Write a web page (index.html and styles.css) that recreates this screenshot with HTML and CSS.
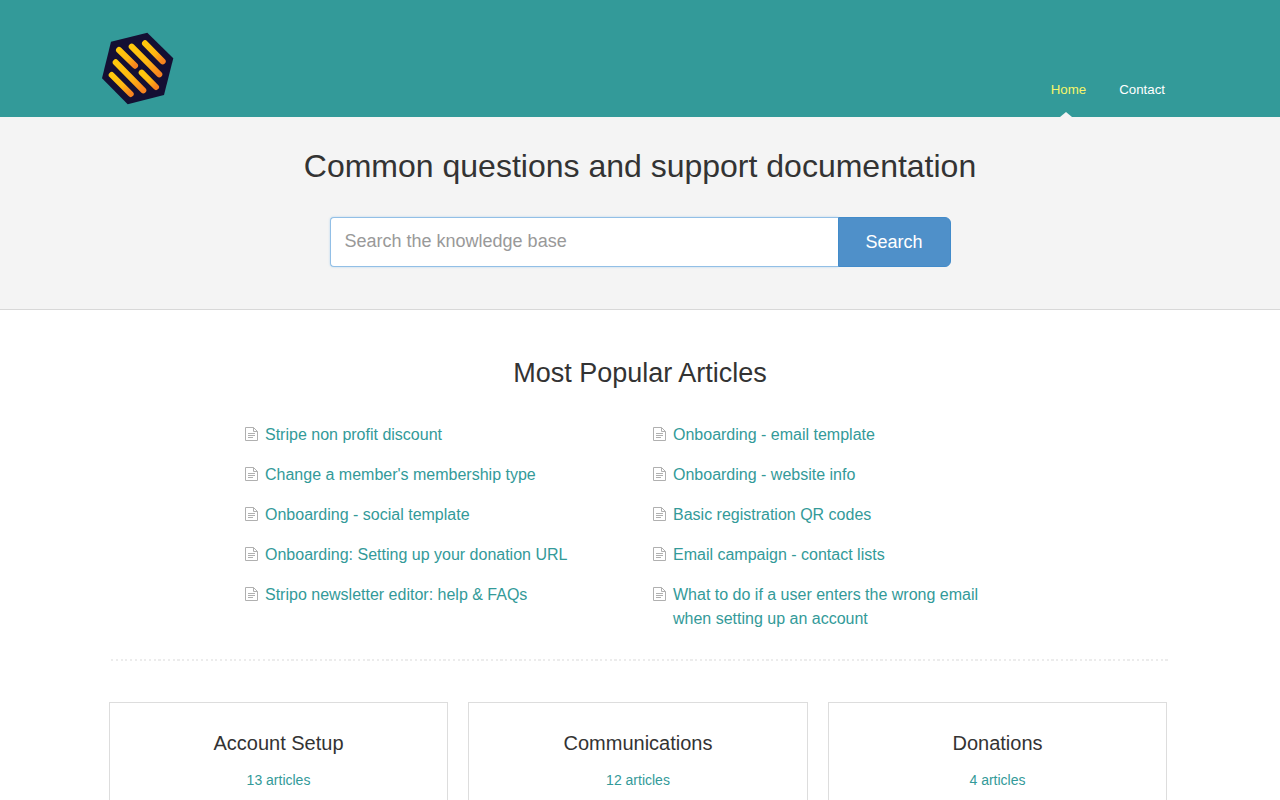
FILE: index.html
```html
<!DOCTYPE html>
<html lang="en">
<head>
  <meta charset="UTF-8">
  <title>Support documentation</title>
  <link rel="stylesheet" href="styles.css">
</head>
<body>
  <header class="site-header">
    <div class="header-inner">
      <a class="logo" href="#">
        <svg width="76" height="76" viewBox="0 0 76 76">
          <defs>
            <linearGradient id="bar" x1="0" y1="0" x2="1" y2="1">
              <stop offset="0" stop-color="#ffc80c"/>
              <stop offset="0.55" stop-color="#ffb912"/>
              <stop offset="1" stop-color="#f8831f"/>
            </linearGradient>
          </defs>
          <polygon points="11,11.7 47.3,2.7 73.3,28.3 64,65 27.7,74.3 2,48.3" fill="#140f33"/>
          <g stroke="url(#bar)" stroke-width="6" stroke-linecap="round">
            <line x1="45" y1="13.3" x2="62.7" y2="31.3"/>
            <line x1="31.7" y1="16.7" x2="59.3" y2="44.3"/>
            <line x1="19" y1="20" x2="35" y2="35.7"/>
            <line x1="41.7" y1="42.7" x2="56" y2="57"/>
            <line x1="15.7" y1="32.3" x2="43.3" y2="60.3"/>
            <line x1="11.7" y1="45" x2="30.7" y2="64"/>
          </g>
        </svg>
      </a>
      <nav class="main-nav">
        <a class="nav-link active" href="#">Home</a>
        <a class="nav-link" href="#">Contact</a>
      </nav>
    </div>
  </header>

  <section class="hero">
    <h1>Common questions and support documentation</h1>
    <form class="search-form">
      <input class="search-input" type="text" placeholder="Search the knowledge base">
      <button class="search-button" type="button">Search</button>
    </form>
  </section>

  <main class="content">
    <h2 class="popular-title">Most Popular Articles</h2>
    <ul class="article-list">
      <li><svg class="doc-icon" viewBox="0 0 13 14"><use href="#doc"/></svg><a href="#">Stripe non profit discount</a></li>
      <li><svg class="doc-icon" viewBox="0 0 13 14"><use href="#doc"/></svg><a href="#">Onboarding - email template</a></li>
      <li><svg class="doc-icon" viewBox="0 0 13 14"><use href="#doc"/></svg><a href="#">Change a member's membership type</a></li>
      <li><svg class="doc-icon" viewBox="0 0 13 14"><use href="#doc"/></svg><a href="#">Onboarding - website info</a></li>
      <li><svg class="doc-icon" viewBox="0 0 13 14"><use href="#doc"/></svg><a href="#">Onboarding - social template</a></li>
      <li><svg class="doc-icon" viewBox="0 0 13 14"><use href="#doc"/></svg><a href="#">Basic registration QR codes</a></li>
      <li><svg class="doc-icon" viewBox="0 0 13 14"><use href="#doc"/></svg><a href="#">Onboarding: Setting up your donation URL</a></li>
      <li><svg class="doc-icon" viewBox="0 0 13 14"><use href="#doc"/></svg><a href="#">Email campaign - contact lists</a></li>
      <li><svg class="doc-icon" viewBox="0 0 13 14"><use href="#doc"/></svg><a href="#">Stripo newsletter editor: help &amp; FAQs</a></li>
      <li><svg class="doc-icon" viewBox="0 0 13 14"><use href="#doc"/></svg><a href="#">What to do if a user enters the wrong email when setting up an account</a></li>
    </ul>

    <div class="divider"></div>

    <div class="categories">
      <div class="category-card">
        <h3>Account Setup</h3>
        <a href="#">13 articles</a>
      </div>
      <div class="category-card">
        <h3>Communications</h3>
        <a href="#">12 articles</a>
      </div>
      <div class="category-card">
        <h3>Donations</h3>
        <a href="#">4 articles</a>
      </div>
    </div>
  </main>

  <svg class="icon-defs" width="0" height="0">
    <symbol id="doc" viewBox="0 0 13 14">
      <path d="M.5 .5h8l4 4v9H.5z M8.5 .5v4h4" fill="none" stroke="#b0b0b0" stroke-width="1"/>
      <path d="M3 6.5h7 M3 8.5h7 M3 10.5h5" fill="none" stroke="#b0b0b0" stroke-width="1"/>
    </symbol>
  </svg>
</body>
</html>
```

FILE: styles.css
```css
/* General styling */
html, body {
  height: 800px;
  overflow: hidden;
}

body {
  margin: 0;
  font-family: "Liberation Sans", Arial, sans-serif;
  font-size: 14px;
  color: #333;
  background: #fff;
}

a {
  color: #339a99;
  text-decoration: none;
}

.icon-defs {
  position: absolute;
}

/* Header */
.site-header {
  background: #339a99;
  height: 117px;
}

.header-inner {
  display: flex;
  justify-content: space-between;
  align-items: flex-start;
  height: 100%;
  padding: 30px 115px 0 100px;
  box-sizing: border-box;
}

.logo {
  display: block;
  height: 76px;
}

.main-nav {
  display: flex;
  gap: 33px;
  margin-top: 44px;
}

.nav-link {
  position: relative;
  display: block;
  height: 43px;
  line-height: 32px;
  font-size: 13.3px;
  color: #fff;
}

.nav-link.active {
  color: #f5f56a;
}

.nav-link.active::after {
  content: "";
  position: absolute;
  left: 50%;
  bottom: 0;
  margin-left: -8px;
  border-left: 6px solid transparent;
  border-right: 6px solid transparent;
  border-bottom: 5px solid #f4f4f4;
}

/* Search */
.hero {
  height: 193px;
  box-sizing: border-box;
  background: #f4f4f4;
  border-bottom: 1px solid #d8d8d8;
  padding-top: 29px;
  text-align: center;
}

.hero h1 {
  margin: 0;
  font-size: 32px;
  font-weight: 400;
  line-height: 40px;
}

.search-form {
  display: flex;
  justify-content: center;
  margin: 31px 0 0;
}

.search-input {
  width: 508px;
  height: 50px;
  box-sizing: border-box;
  padding: 0 14px 2px;
  border: 1px solid #92bfe6;
  border-right: 0;
  border-radius: 4px 0 0 4px;
  box-shadow: 0 0 2px rgba(102, 175, 233, 0.5);
  font: 18px "Liberation Sans", Arial, sans-serif;
  color: #333;
  background: #fff;
  outline: none;
}

.search-input::placeholder {
  color: #999;
  opacity: 1;
}

.search-button {
  width: 113px;
  height: 50px;
  border: 1px solid #428bca;
  border-radius: 0 6px 6px 0;
  background: #4f90c9;
  color: #fff;
  font: 18px "Liberation Sans", Arial, sans-serif;
}

/* Articles */
.popular-title {
  margin: 46px 0 0;
  font-size: 27px;
  font-weight: 400;
  line-height: 34px;
  text-align: center;
}

.article-list {
  display: grid;
  grid-template-columns: 408px 408px;
  justify-content: center;
  margin: 33px 0 0;
  padding: 0;
  list-style: none;
  font-size: 16px;
  line-height: 24px;
}

.article-list li {
  display: flex;
  gap: 7px;
  padding: 0 45px 16px 13px;
}

.doc-icon {
  flex: none;
  width: 13px;
  height: 14px;
  margin-top: 4px;
}

.divider {
  width: 1058px;
  height: 2px;
  margin: 12px 0 0 111px;
  background: repeating-linear-gradient(90deg, #ececec 0 2px, transparent 2px 4.75px);
}

/* Categories */
.categories {
  display: grid;
  grid-template-columns: 339px 340px 339px;
  gap: 20px;
  margin: 41px 0 0 109px;
  width: 1058px;
}

.category-card {
  height: 200px;
  box-sizing: border-box;
  border: 1px solid #ddd;
  padding-top: 27px;
  text-align: center;
}

.category-card h3 {
  margin: 0 0 16px;
  font-size: 20px;
  font-weight: 400;
  line-height: 26px;
}
```
